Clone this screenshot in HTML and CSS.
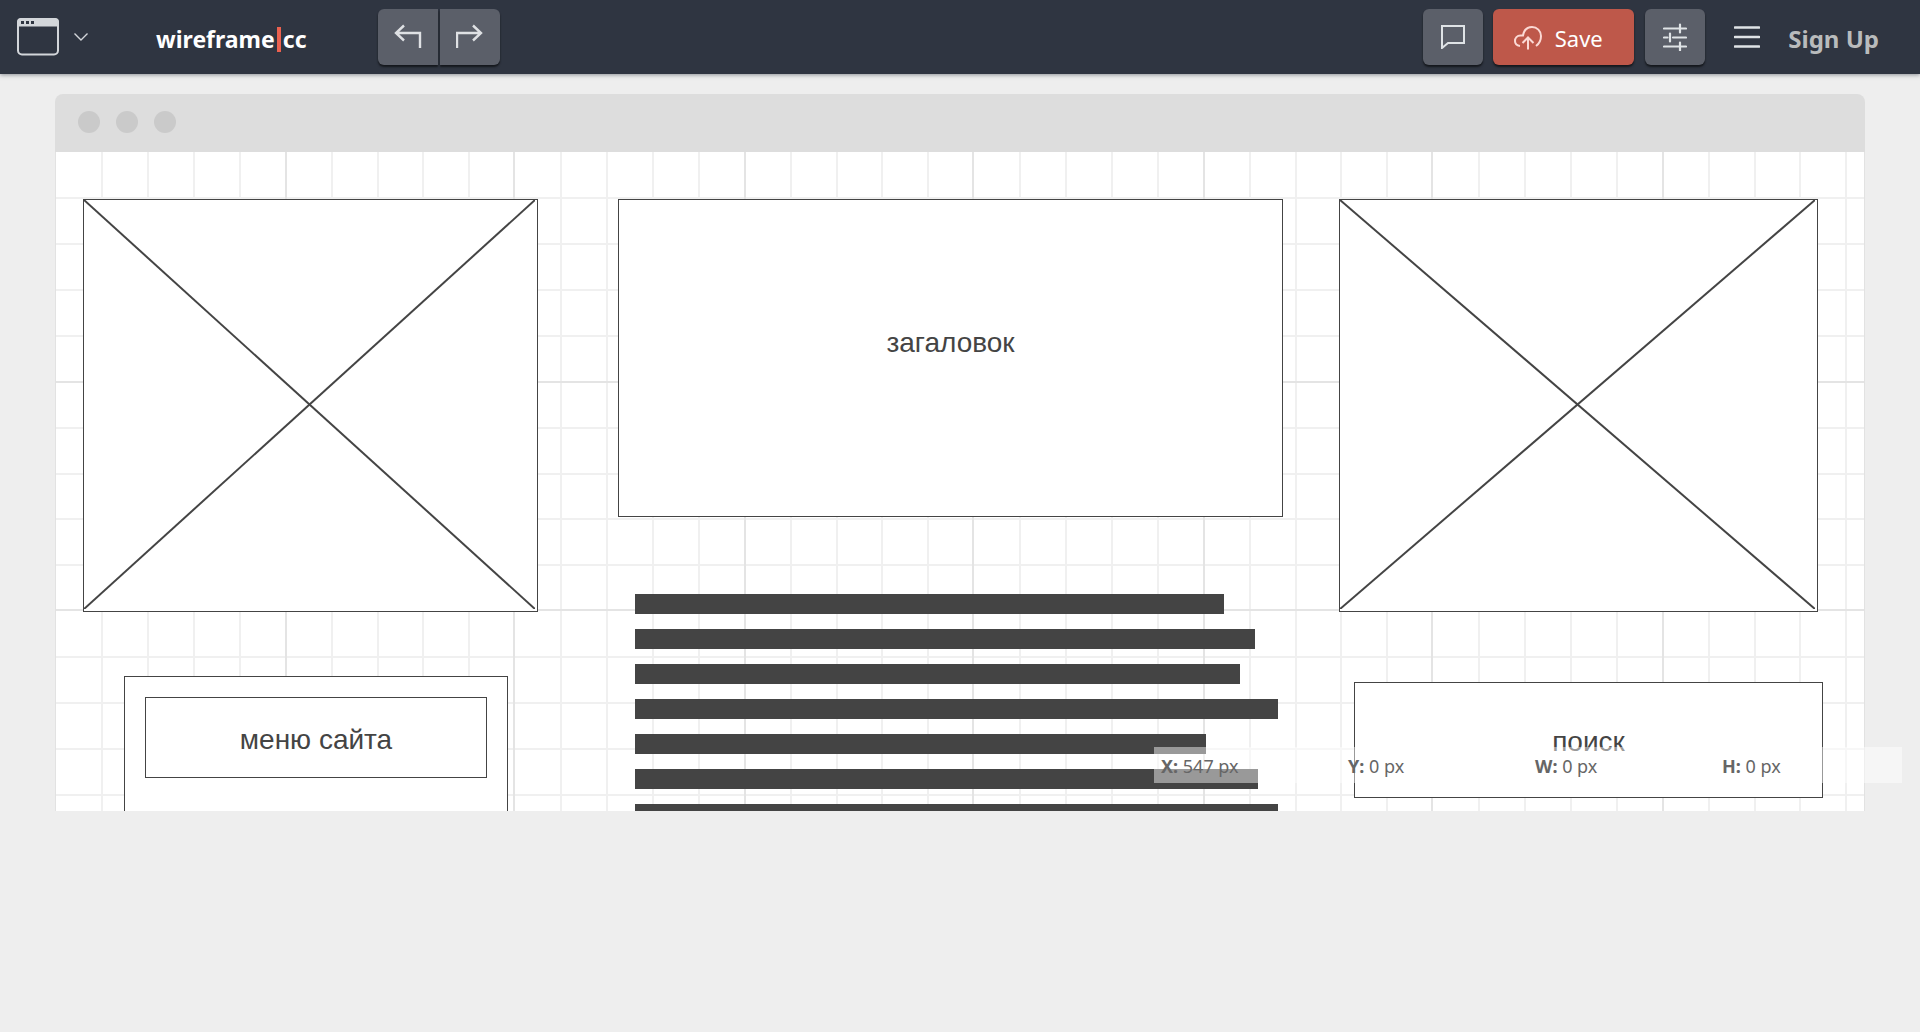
FILE: index.html
```html
<!DOCTYPE html>
<html lang="ru">
<head>
<meta charset="utf-8">
<title>wireframe|cc</title>
<link rel="stylesheet" href="styles.css">
</head>
<body>
<header class="toolbar">
  <button class="plain view-switch" aria-label="Window type">
    <svg width="42" height="38" viewBox="0 0 42 38"><rect x="1" y="1" width="40" height="35.500" rx="4" fill="none" stroke="#d3d6da" stroke-width="2"/><path d="M0 8.500V4a4 4 0 0 1 4-4h34a4 4 0 0 1 4 4v4.500z" fill="#d3d6da"/><path d="M4 3h3v3H4zM9 3h3v3H9zM14 3h3v3h-3z" fill="#2f3541"/></svg>
    <svg width="14" height="8" viewBox="0 0 14 8"><path d="M.5.5L7 7 13.500.5" fill="none" stroke="#d3d6da" stroke-width="1.400"/></svg>
  </button>
  <a class="logo" href="#">wireframe<span class="logo-bar"></span>cc</a>
  <div class="history">
    <button class="tool first" aria-label="Undo"><svg width="28" height="26" viewBox="0 0 28 26"><path d="M26 24V9H2M10 1.500L2 9l8 7.500" fill="none" stroke="#dfe1e4" stroke-width="2.400"/></svg></button>
    <button class="tool last" aria-label="Redo"><svg width="28" height="26" viewBox="0 0 28 26"><path d="M1 24V9h24M17 1.500L25 9l-8 7.500" fill="none" stroke="#dfe1e4" stroke-width="2.400"/></svg></button>
  </div>
  <div class="actions">
    <button class="tool" aria-label="Comments"><svg width="24" height="24" viewBox="0 0 24 24"><path d="M1 1h22v17H7l-6 5z" fill="none" stroke="#dfe3e6" stroke-width="2"/></svg></button>
    <button class="tool save"><svg width="28" height="24" viewBox="0 0 28 24"><path d="M6 20C2.500 19.500 1 17.500 1 15c0-3 2-5.500 5.500-5.500L9 9.500C10 4 13.500 1 18 1c5 0 9 4 9 9 0 4-1.500 7.500-5 10M14 23.500V12M8.500 17L14 11.500l5.500 5.500" fill="none" stroke="#fbd9d4" stroke-width="2"/></svg>Save</button>
    <button class="tool" aria-label="Settings"><svg width="24" height="28" viewBox="0 0 24 28"><path d="M1 5.500h13.500M19 5.500h4M17 1.500v8M1 14.500h3.500M10 14.500h13M7 10.500v8M1 23.500h13.500M19 23.500h4M17 19.500v8M14 5.500h6M14 23.500h6" fill="none" stroke="#dfe3e6" stroke-width="2.200" stroke-linecap="round"/></svg></button>
    <button class="plain menu" aria-label="Menu"><svg width="26" height="22" viewBox="0 0 26 22"><path d="M1 1.500h24M1 11h24M1 20.500h24" stroke="#dfe3e6" stroke-width="2.600" stroke-linecap="round"/></svg></button>
    <a class="signup" href="#">Sign Up</a>
  </div>
</header>
<main class="window">
  <div class="titlebar"><i></i><i></i><i></i></div>
  <div class="canvas">
    <svg class="grid" aria-hidden="true">
      <defs><pattern id="grid" width="459" height="459" patternUnits="userSpaceOnUse">
        <path d="M46 0v459M92 0v459M138 0v459M184 0v459M276 0v459M322 0v459M367 0v459M413 0v459M0 46h459M0 92h459M0 138h459M0 184h459M0 276h459M0 322h459M0 367h459M0 413h459" stroke="#f0f0f0" stroke-width="2"/>
        <path d="M230 0v459M458 0v459M0 230h459M0 458h459" stroke="#e4e4e4" stroke-width="2"/>
      </pattern></defs>
      <rect width="100%" height="100%" fill="url(#grid)"/>
    </svg>
    <div class="shape image-left"><svg width="100%" height="100%"><line x1="0" y1="0" x2="100%" y2="100%"/><line x1="0" y1="100%" x2="100%" y2="0"/></svg></div>
    <div class="shape heading">загаловок</div>
    <div class="shape image-right"><svg width="100%" height="100%"><line x1="0" y1="0" x2="100%" y2="100%"/><line x1="0" y1="100%" x2="100%" y2="0"/></svg></div>
    <div class="shape menu-panel"><div class="menu-title">меню сайта</div></div>
    <div class="text-lines">
      <span style="width:589px"></span><span style="width:620px"></span><span style="width:605px"></span><span style="width:643px"></span><span style="width:571px"></span><span style="width:623px"></span><span style="width:643px"></span>
    </div>
    <div class="shape search">поиск</div>
    <div class="status"><span><b>X:</b> 547 px</span><span><b>Y:</b> 0 px</span><span><b>W:</b> 0 px</span><span><b>H:</b> 0 px</span></div>
  </div>
</main>
</body>
</html>
```

FILE: styles.css
```css
* { box-sizing: border-box; }
body { margin: 0; min-height: 100vh; background: #eee; font-family: "Noto Sans", "Open Sans", sans-serif; overflow-x: hidden; }
svg { display: block; }
button { font: inherit; color: inherit; border: 0; padding: 0; cursor: pointer; }
a { text-decoration: none; }

.toolbar { height: 74px; display: flex; align-items: center; padding: 0 41px 0 17px; background: #2f3541; box-shadow: 0 1px 4px rgba(47, 53, 65, .5); }
.plain { background: none; display: flex; align-items: center; }
.view-switch { width: 72px; gap: 15px; }
.logo { display: flex; align-items: center; width: 222px; margin-left: 67px; padding-top: 4px; color: #fff; font-weight: 700; font-size: 23px; line-height: 32px; }
.logo-bar { width: 4px; height: 25px; margin: 0 2px; background: #ec614f; }
.history { display: flex; gap: 2px; }
.tool { width: 60px; height: 56px; display: flex; align-items: center; justify-content: center; border-radius: 6px; background: #5b5f69; box-shadow: 0 2px 2px #15181d; }
.first { border-radius: 6px 0 0 6px; }
.last { border-radius: 0 6px 6px 0; }
.actions { display: flex; align-items: center; margin-left: auto; }
.save { width: 141px; margin: 0 11px 0 10px; padding: 2px 11px 0 0; gap: 13px; background: #be584a; color: #fff; font-size: 22px; }
.menu { margin: 0 28px 0 29px; }
.signup { padding-top: 4px; color: #b9bbbc; font-weight: 700; font-size: 24px; line-height: 32px; }

.window { margin: 20px 55px 0; }
.titlebar { height: 58px; display: flex; align-items: center; gap: 16px; padding: 0 23px 2px; border-radius: 8px 8px 0 0; background: #ddd; }
.titlebar i { width: 22px; height: 22px; border-radius: 50%; background: #cacaca; }
.canvas { position: relative; height: 659px; border: solid #e2e2e2; border-width: 0 1px; background: #fff; color: #444; font: 28px "Liberation Sans", Arial, sans-serif; clip-path: inset(0 -60px 0 -60px); }
.grid { position: absolute; inset: 0; width: 100%; height: 100%; }
.shape { position: absolute; display: flex; align-items: center; justify-content: center; border: 1px solid #444; background: #fff; }
.shape line { stroke: #444; stroke-width: 2; }
.image-left { left: 27px; top: 47px; width: 455px; height: 413px; padding: 0 2px 2px 0; }
.heading { left: 562px; top: 47px; width: 665px; height: 318px; padding-bottom: 30px; }
.image-right { left: 1283px; top: 47px; width: 479px; height: 413px; padding: 0 2px 2px 0; }
.menu-panel { left: 68px; top: 524px; width: 384px; height: 200px; padding: 20px; align-items: flex-start; }
.menu-title { flex: 1; height: 81px; display: flex; align-items: center; justify-content: center; padding-top: 4px; border: 1px solid #444; }
.text-lines { position: absolute; left: 579px; top: 442px; display: flex; flex-direction: column; gap: 15px; }
.text-lines span { height: 20px; background: #444; }
.search { left: 1298px; top: 530px; width: 469px; height: 116px; padding-top: 4px; }
.status { position: absolute; right: -38px; top: 595px; width: 748px; height: 36px; display: grid; grid-template-columns: repeat(4, 1fr); background: rgba(255, 255, 255, .46); color: #666; font: 18px/38px "Noto Sans", "Open Sans", sans-serif; }
.status span { padding-left: 7px; }
```
